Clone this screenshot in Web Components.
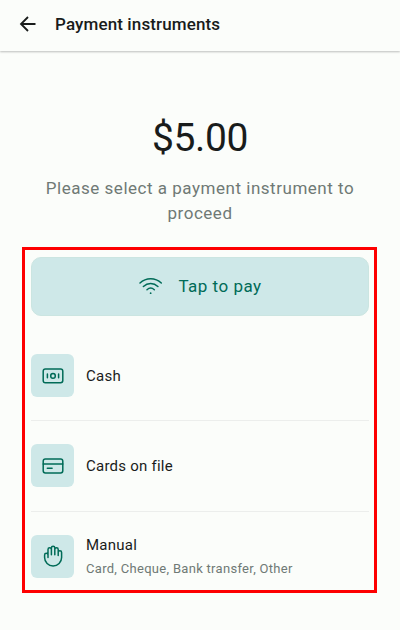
<!DOCTYPE html>
<html lang="en">
<head>
<meta charset="utf-8">
<title>Payment instruments</title>
<style>
  body {
    margin: 0;
    background: #fbfdfa;
    color: #191c1b;
    font-family: Roboto, "Liberation Sans", sans-serif;
  }
</style>
</head>
<body>
<payment-screen>
  <app-bar slot="bar">Payment instruments</app-bar>
  <amount-header amount="$5.00">Please select a payment instrument to proceed</amount-header>
  <instrument-panel>
    <tap-button slot="action">Tap to pay</tap-button>
    <instrument-row icon="cash">Cash</instrument-row>
    <instrument-row icon="card">Cards on file</instrument-row>
    <instrument-row icon="hand" detail="Card, Cheque, Bank transfer, Other">Manual</instrument-row>
  </instrument-panel>
</payment-screen>

<script>
const icons = {
  cash: `
    <rect x="1.2" y="4" width="19.600" height="13.800" rx="2.2"/>
    <circle cx="11" cy="10.900" r="2.3"/>
    <path d="M5.400 9v3.800M16.600 9v3.800"/>`,
  card: `
    <rect x="1.2" y="4" width="19.600" height="14" rx="2.2"/>
    <path d="M1.2 8.900h19.600M5.300 13.300h4.800"/>`,
  hand: `
    <path d="M6 12.500V4.500a1.700 1.700 0 0 1 3.400 0V9.800V3a1.700 1.700 0 0 1 3.400 0V9.800V4.500a1.700 1.700 0 0 1 3.400 0V10.500V7.500a1.700 1.700 0 0 1 3.400 0V12.500a8.500 8.500 0 0 1-17 0V10a1.700 1.700 0 0 1 3.400 0"/>`,
};

class PaymentScreen extends HTMLElement {
  constructor() {
    super();
    this.attachShadow({ mode: "open" });
    this.shadowRoot.innerHTML = `
      <style>
        :host {
          display: flex;
          flex-direction: column;
          height: 630px;
          overflow: hidden;
        }
      </style>
      <slot name="bar"></slot>
      <slot></slot>
    `;
  }
}

class AppBar extends HTMLElement {
  constructor() {
    super();
    this.attachShadow({ mode: "open" });
    this.shadowRoot.innerHTML = `
      <style>
        :host {
          display: flex;
          align-items: center;
          gap: 15px;
          height: 51px;
          padding: 0 16px;
          box-sizing: border-box;
          box-shadow: 0 1px 2px rgba(0, 0, 0, 0.25);
        }
        svg {
          flex: none;
          margin-bottom: 3px;
        }
        h1 {
          margin: 0 0 3px;
          font-size: 17px;
          line-height: 24px;
          font-weight: 500;
          letter-spacing: 0.12px;
          white-space: nowrap;
        }
      </style>
      <svg width="24" height="24" viewBox="0 0 24 24" fill="none" stroke="#191c1b" stroke-width="1.8">
        <path d="M19.500 12H5.200M12 5l-7 7 7 7"/>
      </svg>
      <h1><slot></slot></h1>
    `;
  }
}

class AmountHeader extends HTMLElement {
  constructor() {
    super();
    this.attachShadow({ mode: "open" });
    this.shadowRoot.innerHTML = `
      <style>
        :host {
          display: block;
          padding: 64px 32px 0;
          text-align: center;
        }
        .amount {
          font-size: 39px;
          line-height: 46px;
          letter-spacing: -0.4px;
        }
        p {
          margin: 15px 0 0;
          color: #6f7975;
          font-size: 17px;
          line-height: 25px;
          letter-spacing: 0.52px;
        }
      </style>
      <div class="amount">${this.getAttribute("amount")}</div>
      <p><slot></slot></p>
    `;
  }
}

class InstrumentPanel extends HTMLElement {
  constructor() {
    super();
    this.attachShadow({ mode: "open" });
    this.shadowRoot.innerHTML = `
      <style>
        :host {
          display: block;
          width: 355px;
          height: 346px;
          margin: 21px 0 0 22px;
          padding: 7px 5px 0 6px;
          box-sizing: border-box;
          border: 3px solid #fe0000;
        }
        .list {
          margin-top: 15px;
        }
      </style>
      <slot name="action"></slot>
      <div class="list"><slot></slot></div>
    `;
  }
}

class TapButton extends HTMLElement {
  constructor() {
    super();
    this.attachShadow({ mode: "open" });
    this.shadowRoot.innerHTML = `
      <style>
        :host {
          display: block;
        }
        button {
          display: flex;
          align-items: center;
          justify-content: center;
          gap: 16px;
          width: 338px;
          height: 59px;
          padding: 0 0 1px;
          border: 1px solid #cbe5e1;
          border-radius: 10px;
          background: #cee8e8;
          color: #006b57;
          font: 400 17px/24px Roboto, "Liberation Sans", sans-serif;
          letter-spacing: 0.5px;
        }
      </style>
      <button>
        <svg width="24" height="20" viewBox="0 0 24 20" fill="none" stroke="currentColor" stroke-width="1.5" stroke-linecap="round">
          <path d="M2 7C8 1.200 17.300 1.200 23.300 7M5.400 10.500c4.200-4 10.300-4 14.500 0M9 13.700c2.200-2 5.100-2 7.300 0"/>
          <circle cx="12.650" cy="17.200" r="0.900" fill="currentColor" stroke="none"/>
        </svg>
        <span><slot></slot></span>
      </button>
    `;
  }
}

class InstrumentRow extends HTMLElement {
  constructor() {
    super();
    this.attachShadow({ mode: "open" });
    const detail = this.getAttribute("detail");
    this.shadowRoot.innerHTML = `
      <style>
        :host {
          display: flex;
          align-items: center;
          gap: 12px;
          height: 90.3px;
          box-sizing: border-box;
          border-bottom: 1px solid #eceeec;
        }
        :host(:last-child) {
          border-bottom-color: transparent;
        }
        .tile {
          display: flex;
          align-items: center;
          justify-content: center;
          flex: none;
          width: 43px;
          height: 43px;
          border-radius: 6px;
          background: #cee8e8;
        }
        .title {
          font-size: 15px;
          line-height: 20px;
          letter-spacing: 0.24px;
        }
        .detail {
          margin-top: 5px;
          color: #6f7975;
          font-size: 13px;
          line-height: 17px;
          letter-spacing: 0.3px;
        }
      </style>
      <div class="tile">
        <svg width="22" height="22" viewBox="0 0 22 22" fill="none" stroke="#006b57" stroke-width="1.5" stroke-linecap="round" stroke-linejoin="round">${icons[this.getAttribute("icon")]}</svg>
      </div>
      <div>
        <div class="title"><slot></slot></div>
        ${detail ? `<div class="detail">${detail}</div>` : ""}
      </div>
    `;
  }
}

customElements.define("payment-screen", PaymentScreen);
customElements.define("app-bar", AppBar);
customElements.define("amount-header", AmountHeader);
customElements.define("instrument-panel", InstrumentPanel);
customElements.define("tap-button", TapButton);
customElements.define("instrument-row", InstrumentRow);
</script>
</body>
</html>
